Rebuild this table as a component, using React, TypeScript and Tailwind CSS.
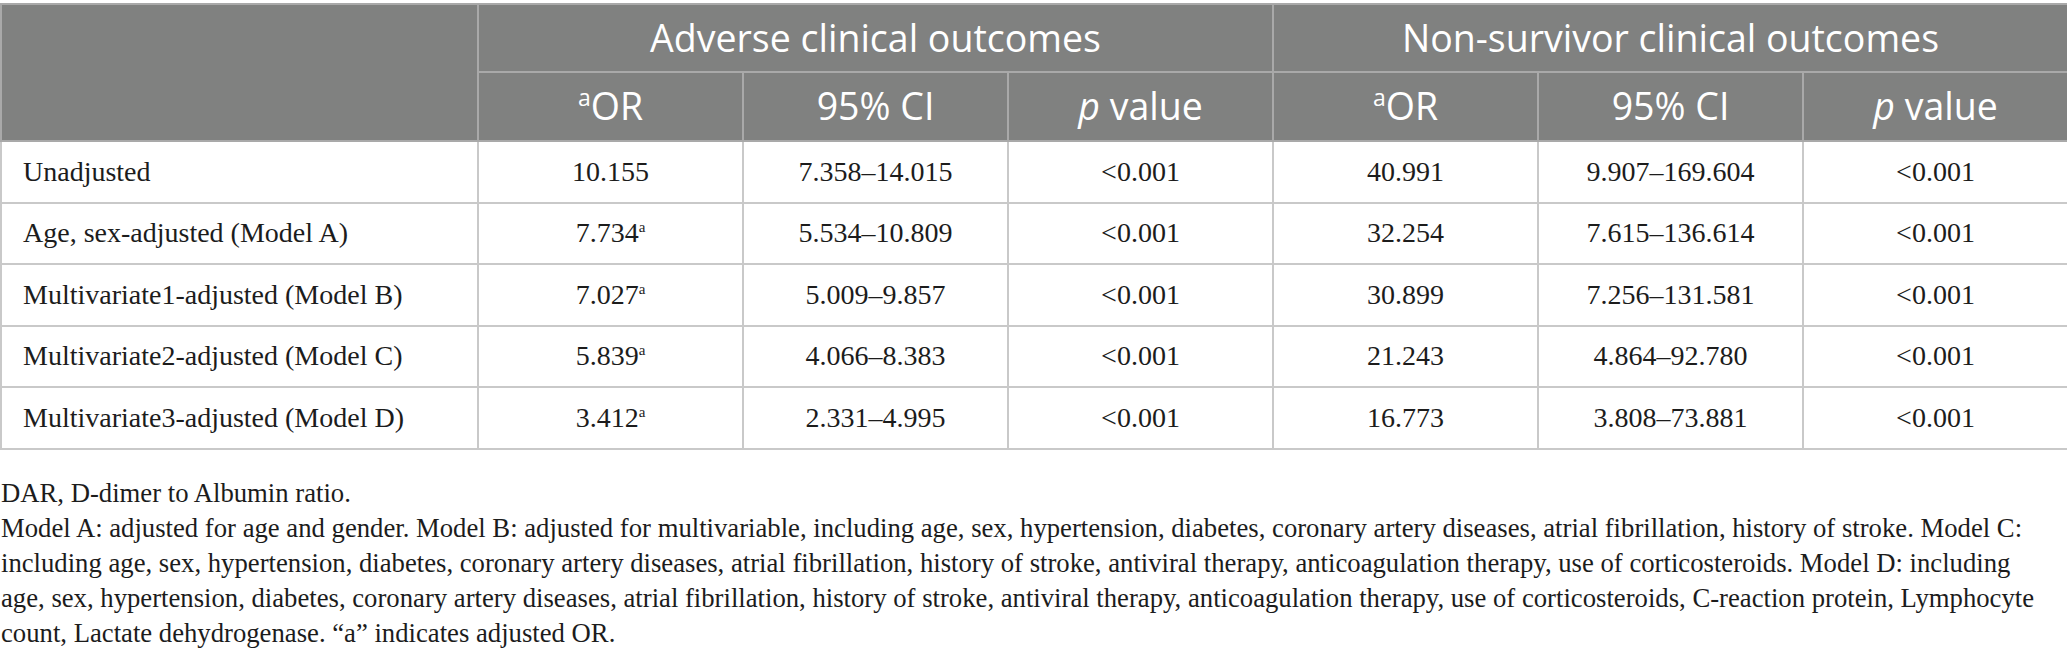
const SERIF = "font-['Liberation_Serif','Times_New_Roman',serif]";

type Row = {
  label: string;
  or1: string;
  adj?: boolean;
  ci1: string;
  p1: string;
  or2: string;
  ci2: string;
  p2: string;
};

const ROWS: Row[] = [
  { label: "Unadjusted", or1: "10.155", ci1: "7.358–14.015", p1: "<0.001", or2: "40.991", ci2: "9.907–169.604", p2: "<0.001" },
  { label: "Age, sex-adjusted (Model A)", or1: "7.734", adj: true, ci1: "5.534–10.809", p1: "<0.001", or2: "32.254", ci2: "7.615–136.614", p2: "<0.001" },
  { label: "Multivariate1-adjusted (Model B)", or1: "7.027", adj: true, ci1: "5.009–9.857", p1: "<0.001", or2: "30.899", ci2: "7.256–131.581", p2: "<0.001" },
  { label: "Multivariate2-adjusted (Model C)", or1: "5.839", adj: true, ci1: "4.066–8.383", p1: "<0.001", or2: "21.243", ci2: "4.864–92.780", p2: "<0.001" },
  { label: "Multivariate3-adjusted (Model D)", or1: "3.412", adj: true, ci1: "2.331–4.995", p1: "<0.001", or2: "16.773", ci2: "3.808–73.881", p2: "<0.001" },
];

// footnote kept on the same line breaks as the printed table
const NOTES = [
  "Model A: adjusted for age and gender. Model B: adjusted for multivariable, including age, sex, hypertension, diabetes, coronary artery diseases, atrial fibrillation, history of stroke. Model C:",
  "including age, sex, hypertension, diabetes, coronary artery diseases, atrial fibrillation, history of stroke, antiviral therapy, anticoagulation therapy, use of corticosteroids. Model D: including",
  "age, sex, hypertension, diabetes, coronary artery diseases, atrial fibrillation, history of stroke, antiviral therapy, anticoagulation therapy, use of corticosteroids, C-reaction protein, Lymphocyte",
  "count, Lactate dehydrogenase. “a” indicates adjusted OR.",
];

const th = "border-2 border-[#a9a9a9] font-normal text-white text-center";
const td = "border-2 border-[#c9c9c9] text-center";

function SubHeads() {
  return (
    <>
      <th className={th}>
        <sup className="top-0 text-[23px] align-[14px]">a</sup>OR
      </th>
      <th className={th}>95% CI</th>
      <th className={th}>
        <i>p</i> value
      </th>
    </>
  );
}

export default function App() {
  return (
    <div className="w-[2067px] bg-white pt-[3px] text-[#1c1c1c]">
      <table className="w-[2067px] table-fixed border-collapse">
        <colgroup>
          <col className="w-[477px]" />
          <col className="w-[265px]" />
          <col className="w-[265px]" />
          <col className="w-[265px]" />
          <col className="w-[265px]" />
          <col className="w-[265px]" />
          <col className="w-[265px]" />
        </colgroup>
        <thead className="bg-[#808180] font-['Open_Sans',sans-serif] text-[37.5px]">
          <tr className="h-[68px]">
            <th rowSpan={2} className={th} />
            <th colSpan={3} className={th}>
              Adverse clinical outcomes
            </th>
            <th colSpan={3} className={th}>
              Non-survivor clinical outcomes
            </th>
          </tr>
          <tr className="h-[69px]">
            <SubHeads />
            <SubHeads />
          </tr>
        </thead>
        <tbody className={`${SERIF} text-[28px]`}>
          {ROWS.map((r) => (
            <tr key={r.label} className="h-[61.5px]">
              <td className={`${td} pl-[21px] text-left`}>{r.label}</td>
              <td className={td}>
                {r.or1}
                {r.adj && <sup className="top-0 text-[15px] align-[10px]">a</sup>}
              </td>
              <td className={td}>{r.ci1}</td>
              <td className={td}>{r.p1}</td>
              <td className={td}>{r.or2}</td>
              <td className={td}>{r.ci2}</td>
              <td className={td}>{r.p2}</td>
            </tr>
          ))}
        </tbody>
      </table>
      <div className={`${SERIF} mt-[25px] pl-[1px] text-[26.7px]`}>
        <p className="h-[36px] whitespace-nowrap leading-[36px]">DAR, D-dimer to Albumin ratio.</p>
        {NOTES.map((n) => (
          <p key={n} className="h-[35px] whitespace-nowrap leading-[35px]">
            {n}
          </p>
        ))}
      </div>
    </div>
  );
}
